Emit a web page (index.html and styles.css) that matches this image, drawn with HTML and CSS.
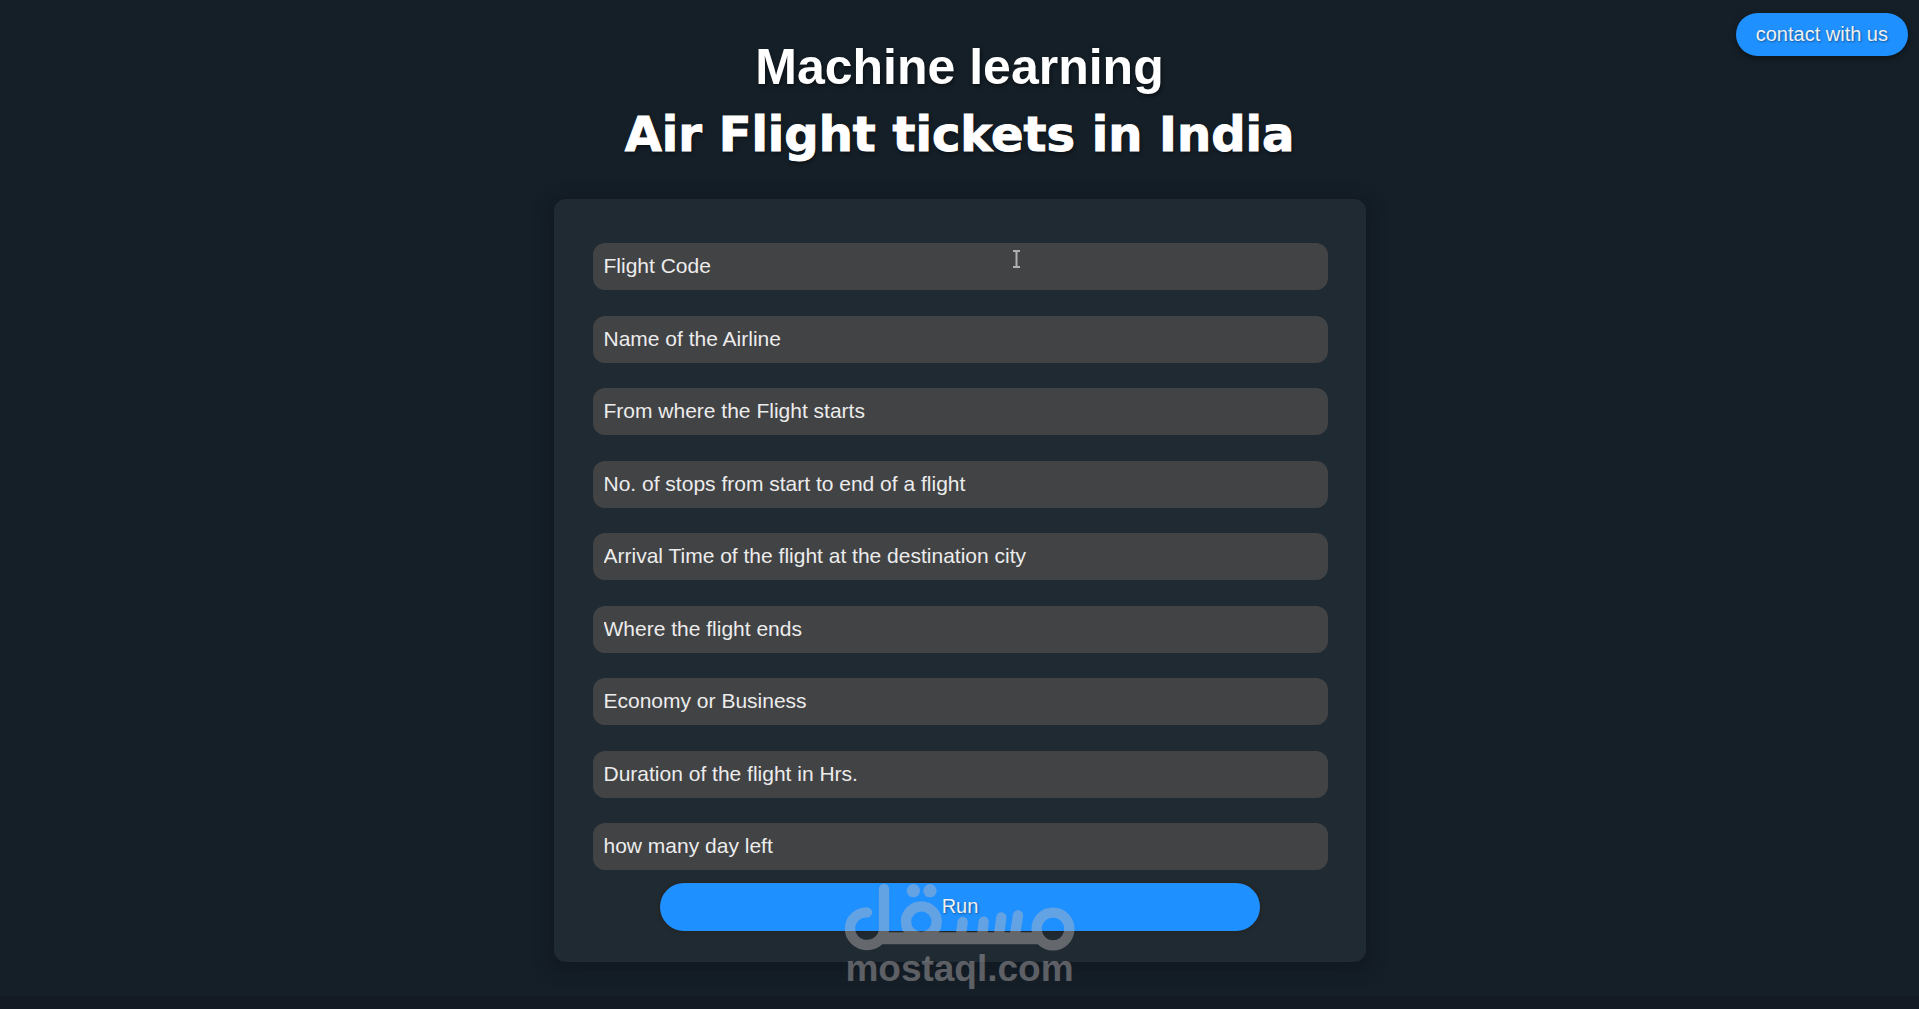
FILE: index.html
```html
<!DOCTYPE html>
<html lang="en">
  <head>
    <meta charset="UTF-8" />
    <meta name="viewport" content="width=device-width, initial-scale=1.0" />
    <title>Air Flight tickets in India</title>
    <link rel="stylesheet" href="styles.css">
  </head>
  <body>
    <a class="contact" href="#contact">contact with us</a>

    <header>
      <h1>Machine learning</h1>
      <h2>Air Flight tickets in India</h2>
    </header>

    <main>
      <form class="panel">
        <div class="fields">
          <input type="text" name="flight" placeholder="Flight Code" aria-label="Flight Code" />
          <input type="text" name="airline" placeholder="Name of the Airline" aria-label="Name of the Airline" />
          <input type="text" name="source" placeholder="From where the Flight starts" aria-label="From where the Flight starts" />
          <input type="text" name="stops" placeholder="No. of stops from start to end of a flight" aria-label="No. of stops from start to end of a flight" />
          <input type="text" name="arrival" placeholder="Arrival Time of the flight at the destination city" aria-label="Arrival Time of the flight at the destination city" />
          <input type="text" name="destination" placeholder="Where the flight ends" aria-label="Where the flight ends" />
          <input type="text" name="class" placeholder="Economy or Business" aria-label="Economy or Business" />
          <input type="text" name="duration" placeholder="Duration of the flight in Hrs." aria-label="Duration of the flight in Hrs." />
          <input type="text" name="days" placeholder="how many day left" aria-label="how many day left" />
        </div>
        <button type="submit" class="run">Run</button>

        <svg class="cursor" viewBox="0 0 9 18" aria-hidden="true">
          <path d="M1 1h2.500l1 1 1-1H8M4.500 2v14M1 17h2.500l1-1 1 1H8" />
        </svg>

        <div class="watermark">
          <svg viewBox="70 68 694 204" aria-hidden="true">
            <g fill="none" stroke="#c3bebe" stroke-width="31" stroke-linecap="round">
              <path d="M189 86V206A51 49 0 1 1 138 156" />
              <circle cx="301" cy="184" r="46" />
              <path d="M425 185l-5 38M488 184l-4 39M541 171l-7 52M591 165l-9 58" />
              <circle cx="696" cy="206" r="49" />
              <path stroke-width="36" stroke-linecap="butt" d="M178 234H656" />
            </g>
            <g fill="#c3bebe">
              <circle cx="277" cy="91" r="20" />
              <circle cx="327" cy="91" r="20" />
            </g>
          </svg>
          <span>mostaql.com</span>
        </div>
      </form>
    </main>
    <footer></footer>
  </body>
</html>
```

FILE: styles.css
```css
* {
  box-sizing: border-box;
}
body {
  margin: 0;
  min-height: 100vh;
  display: flex;
  flex-direction: column;
  background-color: #151f27;
  color: white;
  font-family: Arial, "Liberation Sans", sans-serif;
}

header {
  padding-top: 34px;
  text-align: center;
  text-shadow: 1px 2px 4px rgba(0, 0, 0, 0.5);
}
h1,
h2 {
  margin: 0;
  font-size: 50px;
  line-height: 67px;
}
h2 {
  font-family: "Arial Black", "DejaVu Sans", sans-serif;
  font-size: 48px;
  font-weight: 900;
  -webkit-text-stroke: 1px white;
}

.contact {
  position: absolute;
  top: 13px;
  right: 11px;
  padding: 0 20px;
  border-radius: 22px;
  background-color: dodgerblue;
  color: #f0f0f0;
  font-size: 20px;
  line-height: 43px;
  text-decoration: none;
  text-shadow: 1px 1px 2px rgba(0, 0, 0, 0.4);
  box-shadow: 0 2px 6px rgba(0, 0, 0, 0.4);
}

main {
  flex: 1;
  padding: 31px 16px;
}
.panel {
  position: relative;
  max-width: 812px;
  margin: 0 auto;
  padding: 44px 38px 31px 39px;
  border-radius: 12px;
  background-color: #202a32;
  box-shadow: 0 4px 16px 4px #111822;
}
.fields {
  display: grid;
  align-content: space-between;
  min-height: 627px;
}
input {
  width: 100%;
  height: 47px;
  padding: 0 11px 1px;
  border: none;
  border-radius: 12px;
  background-color: #424345;
  color: #ececec;
  font-family: inherit;
  font-size: 21px;
}
input::placeholder {
  color: #ececec;
  opacity: 1;
}
.run {
  display: block;
  width: 100%;
  max-width: 600px;
  height: 48px;
  margin: 13px auto 0;
  padding: 0 6px 2px;
  border: none;
  border-radius: 24px;
  background-color: dodgerblue;
  color: #f0f0f0;
  font-family: inherit;
  font-size: 20px;
  text-shadow: 1px 1px 2px rgba(0, 0, 0, 0.4);
  box-shadow: 0 0 4px rgba(40, 30, 20, 0.8);
}

.cursor {
  position: absolute;
  top: 51px;
  left: 458px;
  width: 9px;
  height: 18px;
  fill: none;
  stroke: #b0b0b3;
  stroke-width: 2px;
}

/* logo laid over the bottom edge of the form */
.watermark {
  position: absolute;
  top: 684px;
  left: 0;
  right: 0;
  display: flex;
  flex-direction: column;
  align-items: center;
  color: #c3bebe;
  opacity: 0.42;
  pointer-events: none;
}
.watermark svg {
  width: 232px;
  height: 68px;
}
.watermark span {
  font-size: 37px;
  font-weight: bold;
  line-height: 36px;
}

footer {
  height: 13px;
  background-color: #131a24;
}
```
